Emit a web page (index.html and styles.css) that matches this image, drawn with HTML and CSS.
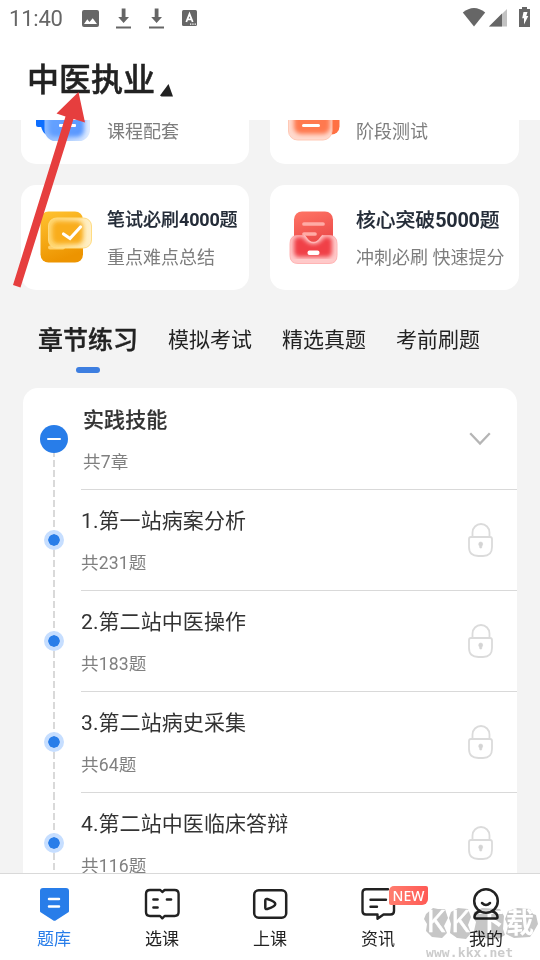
FILE: index.html
```html
<!DOCTYPE html>
<html lang="zh-CN">
<head>
<meta charset="utf-8">
<title>题库</title>
<link rel="stylesheet" href="styles.css">
</head>
<body>
<div class="app">
  <header class="header">
    <div class="status">
      <span class="clock">11:40</span>
      <svg class="status-left" width="125" height="30" viewBox="75 0 125 30" fill="#666">
        <path fill-rule="evenodd" d="M84 10h13q2 0 2 2v13q0 2-2 2H84q-2 0-2-2V12q0-2 2-2zm0 14h13l-4.300-5.800-3.200 3.800-2.200-2.700z"/>
        <path d="M121.700 8.500h3.800v8.500h3.500l-5.400 6-5.400-6h3.500zM116 26.500h15v2h-15zM154.700 8.500h3.800v8.500h3.500l-5.400 6-5.400-6h3.500zM149 26.500h15v2h-15z"/>
        <rect x="182" y="10" width="15" height="16" rx="1.500"/>
        <path d="M186.300 22l3.200-8 3.200 8M187.500 19.300h4" fill="none" stroke="#fff" stroke-width="1.800"/>
        <path d="M190 23.500h1.300v1.300H190zm2.300 0h1.300v1.300h-1.300zm2.300 0h1.300v1.300h-1.300z" fill="#fff"/>
      </svg>
      <svg class="status-right" width="75" height="30" viewBox="460 0 75 30" fill="#666">
        <path d="M474 26.500L462.800 12.500Q474 3.500 485.200 12.500z"/>
        <path d="M489 26.500L507 9v17.500z" fill="#c2c2c2"/><path d="M489 26.500L502 13.500v13z"/>
        <path d="M522 7h5v2h3v18h-11V9h3z"/>
        <path d="M523.500 12h4l-1.200 4h2l-4.300 8.500v-6.300h-1.800z" fill="#fff"/>
      </svg>
    </div>
    <div class="exam"><h1>中医执业</h1><svg width="13" height="13" viewBox="0 0 13 13"><path d="M8.500 0L13 12.500H1.500L0 11.500z" fill="#222"/></svg></div>
  </header>

  <main class="content">
    <section class="cards">
      <article class="card card-scrolled">
        <svg class="card-icon" width="60" height="60" viewBox="34 78 60 60">
          <defs><linearGradient id="b1" x2="1" y2="1"><stop stop-color="#6da8ff"/><stop offset="1" stop-color="#5796ff"/></linearGradient><linearGradient id="b2"><stop stop-color="#8bb9ff"/><stop offset="1" stop-color="#dfebff"/></linearGradient><filter id="soft"><feGaussianBlur stdDeviation="2.200"/></filter></defs>
          <path d="M36 82h43v42H38q-2 0-2-2z" fill="#0d6eff"/>
          <path d="M41 123.500h5v8q-3.500-2-5-8z" fill="#0d6eff"/>
          <rect x="44.500" y="90" width="45.500" height="48.500" rx="12" fill="url(#b2)"/>
          <rect x="48" y="92" width="36" height="42" rx="7" fill="url(#b1)" filter="url(#soft)"/>
          <rect x="59" y="121" width="17" height="3" rx="1" fill="#fff"/>
        </svg>
        <div class="card-text"><p>课程配套</p></div>
      </article>
      <article class="card card-right card-scrolled">
        <svg class="card-icon" width="60" height="60" viewBox="285 80 60 60">
          <rect x="299" y="84" width="40.500" height="49.500" rx="8" fill="#ff7043"/>
          <rect x="288.500" y="96.500" width="43.500" height="42.500" rx="9" fill="#ffd9cd" stroke="#ffc9b6"/>
          <rect x="294" y="98" width="36" height="35" rx="7" fill="#ff7950" filter="url(#soft)"/>
          <rect x="302" y="123" width="18" height="3" rx="1.500" fill="#fff"/>
        </svg>
        <div class="card-text"><p>阶段测试</p></div>
      </article>
      <article class="card">
        <svg class="card-icon" width="60" height="60" viewBox="34 207 60 60">
          <defs><linearGradient id="y1" x2=".3" y2="1"><stop stop-color="#ffc331"/><stop offset="1" stop-color="#ed9400"/></linearGradient><linearGradient id="y2"><stop stop-color="#ffd66e"/><stop offset="1" stop-color="#fff0ca"/></linearGradient></defs>
          <rect x="40.500" y="211.500" width="42.500" height="51" rx="8" fill="url(#y1)"/>
          <rect x="48" y="245.500" width="17" height="4" rx="2" fill="#ffd06a"/>
          <rect x="48.500" y="218" width="43" height="30" rx="8" fill="url(#y2)" stroke="#ffdc82"/>
          <rect x="52" y="221" width="31" height="23" rx="6" fill="#f9ad1d" filter="url(#soft)"/>
          <path d="M63.500 234l6.500 4.500 10.500-11.500" fill="none" stroke="#fff" stroke-width="3.200" stroke-linecap="round"/>
        </svg>
        <div class="card-text"><h2>笔试必刷<b>4000</b>题</h2><p>重点难点总结</p></div>
      </article>
      <article class="card card-right">
        <svg class="card-icon" width="60" height="60" viewBox="285 207 60 60">
          <defs><linearGradient id="r1" x2=".3" y2="1"><stop stop-color="#ff7565"/><stop offset="1" stop-color="#e84345"/></linearGradient></defs>
          <rect x="294" y="211.500" width="39" height="42" rx="8" fill="url(#r1)"/>
          <path d="M304 224h19M304 234h11" stroke="#ffaba5" stroke-width="3.700" stroke-linecap="round"/>
          <path d="M298 235.500h6c2 0 3 7 9.500 7s7-7 9.500-7h6q8 0 8 8v12q0 8-8 8h-31q-8 0-8-8v-12q0-8 8-8z" fill="#ffc9c9" stroke="#ffb4b4"/>
          <path d="M298 237h5q4 7 10.500 7t10.500-7h5q3 0 3 5v9q0 6-5 6h-28q-5 0-5-6v-9q0-5 4-5z" fill="#f04046" filter="url(#soft)"/>
          <path d="M304 235.500c2 0 3 7 9.500 7s7-7 9.500-7" fill="none" stroke="#ffb4b4" stroke-width="1.300"/>
          <rect x="307.500" y="250.500" width="12" height="4.500" rx="2" fill="#fff"/>
        </svg>
        <div class="card-text"><h2>核心突破<b>5000</b>题</h2><p>冲刺必刷 快速提分</p></div>
      </article>
    </section>

    <nav class="tabs">
      <span class="tab active">章节练习</span><span class="tab">模拟考试</span><span class="tab">精选真题</span><span class="tab">考前刷题</span>
    </nav>

    <section class="chapters">
      <div class="row group">
        <div class="rail"><i class="toggle"></i></div>
        <div class="row-body"><div><h3>实践技能</h3><p>共7章</p></div>
          <svg class="chevron" width="22" height="14" viewBox="0 0 22 14"><path d="M1.200 1.300L11 11.500 20.800 1.300" fill="none" stroke="#b5b5b5" stroke-width="2.300"/></svg></div>
      </div>
      <div class="row"><div class="rail"><i class="dot"></i></div><div class="row-body"><div><h3>1.第一站病案分析</h3><p>共231题</p></div><svg class="lock" width="26" height="34"><use href="#lock"/></svg></div></div>
      <div class="row"><div class="rail"><i class="dot"></i></div><div class="row-body"><div><h3>2.第二站中医操作</h3><p>共183题</p></div><svg class="lock" width="26" height="34"><use href="#lock"/></svg></div></div>
      <div class="row"><div class="rail"><i class="dot"></i></div><div class="row-body"><div><h3>3.第二站病史采集</h3><p>共64题</p></div><svg class="lock" width="26" height="34"><use href="#lock"/></svg></div></div>
      <div class="row"><div class="rail"><i class="dot"></i></div><div class="row-body"><div><h3>4.第二站中医临床答辩</h3><p>共116题</p></div><svg class="lock" width="26" height="34"><use href="#lock"/></svg></div></div>
    </section>
  </main>

  <nav class="bottom">
    <a class="item on"><svg width="40" height="36" viewBox="34 886 40 36"><path d="M43 888h23q3 0 3 3v20q0 1-1 1.600l-12 7.700q-1.500 1-3 0l-12-7.700q-1-.6-1-1.600v-20q0-3 3-3z" fill="#287de9"/><path d="M49 899h10M49 906.500h10" stroke="#fff" stroke-width="2.500" stroke-linecap="round"/></svg><span>题库</span></a>
    <a class="item"><svg width="40" height="36" viewBox="142 886 40 36" fill="none" stroke="#222" stroke-width="2.400" stroke-linejoin="round" stroke-linecap="round"><path d="M162.300 892l-2-2H150q-4 0-4 4v18q0 4 4 4h10l2.300 2.300 2.300-2.300h10q4 0 4-4v-18q0-4-4-4h-10z"/><path d="M153.500 899.500h4M167 899.500h4M153.500 907.500h4" stroke-width="2.700"/></svg><span>选课</span></a>
    <a class="item"><svg width="40" height="36" viewBox="250 886 40 36" fill="none" stroke="#222" stroke-width="2.500" stroke-linejoin="round"><rect x="254.200" y="890.200" width="32" height="27.500" rx="4.500"/><path d="M265.300 900.500q0-2 2-1.500 8 2.500 8 5t-8 5q-2 .5-2-1.500z"/></svg><span>上课</span></a>
    <a class="item"><svg width="40" height="36" viewBox="358 886 40 36" fill="none" stroke="#222" stroke-width="2.400" stroke-linejoin="round" stroke-linecap="round"><path d="M388 889.300h-22q-3.500 0-3.500 3.500V911q0 3.500 3.500 3.500h11.500v4.300l6-4.300h7q3.500 0 3.500-3.500v-6M370.500 899.700H386M370.500 906.700h6.500"/></svg><b class="badge">NEW</b><span>资讯</span></a>
    <a class="item"><svg width="40" height="36" viewBox="466 886 40 36" fill="none" stroke="#222" stroke-width="2.500" stroke-linejoin="round" stroke-linecap="round"><circle cx="486" cy="901" r="11.800"/><path d="M482 903q4 4 8 0M479.500 911.500q-5 1.500-5 5.500 0 1.500 1.500 1.500h20q1.500 0 1.500-1.500 0-4-5-5.500"/></svg><span>我的</span></a>
  </nav>

  <svg class="arrow" width="100" height="210" viewBox="0 85 100 210"><path d="M78.500 92L85 122.500 73.500 119 20.500 287.500 13 285 65.500 116.500 56.500 113.500z" fill="#e63e3e"/></svg>
  <div class="watermark">
    <svg width="118" height="36" viewBox="422 906 118 36">
      <g fill="#c6c6c6"><path d="M426 914l7-6 5 1 7 0 3 9-4 8 3 7-5 5-10-1-6-6 1-7-3-5z"/><path d="M451 912l7-4 10 1 3 8-3 8 3 8-5 6-9-1-7-5 1-9-2-6z"/><path d="M474 912l8-4 18 1 4 7-1 13 2 6-7 4-17-1-7-7 2-9-3-5z"/><path d="M508 911l9-3 13 1 3 5 3 1 2 9-4 7-4 6-16 1-8-4 2-8-3-7z"/></g>
      <text class="mark" x="426.500" y="932">K</text><text class="mark" x="451" y="932">K</text><text class="mark mark-cjk" x="476" y="933" textLength="58">下载</text>
    </svg>
    <div class="site">www.kkx.net</div>
  </div>
</div>
<svg class="defs" width="0" height="0"><defs><g id="lock" fill="none" stroke="#dbdbdb" stroke-width="1.800"><path d="M4.500 14V9.500a8.500 8.500 0 0 1 17 0V14"/><path d="M3 14h19q2 0 2 2v8q0 9-9 9h-4.500q-9.500 0-9.500-9v-8q0-2 2-2z"/><path d="M12.700 19q2 0 2 2 0 1-.8 2l-.4 2h-1.600l-.4-2q-.8-1-.8-2 0-2 2-2z" fill="#d4d4d4" stroke="#d4d4d4" stroke-width=".6"/></g></defs></svg>
</body>
</html>
```
FILE: styles.css
```css
* { box-sizing: border-box; margin: 0; padding: 0; }
body { width: 540px; height: 960px; overflow: hidden; font-family: Roboto, "Noto Sans CJK SC", sans-serif; color: #333; background: #f3f3f3; }
svg { display: block; flex: none; }
.app { position: relative; width: 540px; height: 960px; display: flex; flex-direction: column; overflow: hidden; background: #fff; }
.header { height: 120px; flex: none; background: #fff; }
.status { height: 36px; display: flex; align-items: flex-start; padding-left: 9px; }
.clock { width: 66px; font-size: 22px; line-height: 38px; color: #666; letter-spacing: -0.2px; }
.status-right { margin-left: auto; margin-right: 5px; }
.exam { display: flex; padding-left: 27px; gap: 5px; }
.exam h1 { font-size: 32px; line-height: 48px; margin-top: 20px; font-weight: 500; color: #222; -webkit-text-stroke: 0.5px #222; }
.exam svg { margin-top: 48px; }

.content { flex: 1; min-height: 0; overflow: hidden; background: #f3f3f3; }
.cards { display: grid; grid-template-columns: 228px 249px; gap: 21px; margin: -61px 21px 0; }
.card { height: 105px; border-radius: 15px; background: #fff; display: flex; padding: 22px 0 0 13px; }
.card-right { padding-left: 15px; }
.card-text { margin-left: 13px; white-space: nowrap; }
.card-right .card-text { margin-left: 11px; }
.card-scrolled .card-text { padding-top: 26px; }
.card h2 { font-size: 18px; line-height: 26px; font-weight: 500; color: #242c38; -webkit-text-stroke: 0.2px #242c38; }
.card h2 b { font-weight: 700; letter-spacing: -0.2px; -webkit-text-stroke: 0; }
.card-right h2 { font-size: 19.8px; line-height: 28px; }
.card p { font-size: 18px; line-height: 26px; margin-top: 12px; color: #7d7d7d; }
.card-right h2 + p { margin-top: 10px; }

.tabs { display: flex; gap: 30px; height: 98px; padding: 30px 0 0 38px; }
.tab { font-size: 21px; line-height: 40px; color: #222; white-space: nowrap; }
.tab.active { font-size: 25px; line-height: 42px; font-weight: 500; -webkit-text-stroke: 0.4px #222; }
.tab.active::after { content: ""; display: block; width: 24px; height: 6px; margin: 5px auto 0; border-radius: 3px; background: #3d7ee0; }

.chapters { margin: 0 23px; border-radius: 15px 15px 0 0; background: #fff; }
.row { display: flex; height: 101px; }
.row.group { height: 102px; }
.rail { width: 58px; flex: none; display: flex; justify-content: center; align-items: center; padding: 0 0 2px 4px; background: repeating-linear-gradient(to bottom, #d9d9d9 0 7px, transparent 7px 10px) 30px 0 / 2px 100% no-repeat; }
.group .rail { padding-bottom: 0; background-position: 30px 52px; }
.toggle { width: 28px; height: 28px; border-radius: 50%; background: #287de9; display: flex; align-items: center; justify-content: center; }
.toggle::after { content: ""; width: 14px; height: 2px; background: #fff; border-radius: 1px; }
.dot { width: 20px; height: 20px; border: 4px solid #c6deff; border-radius: 50%; background: #287de9; background-clip: padding-box; }
.row-body { flex: 1; display: flex; justify-content: space-between; border-bottom: 1px solid #d9d9d9; padding-right: 23px; }
.row:last-child .row-body { border-bottom: 0; }
.row h3 { font-size: 21px; line-height: 30px; margin-top: 16px; font-weight: 400; color: #333; letter-spacing: 0.08px; }
.row p { font-size: 17.6px; line-height: 26px; margin-top: 14px; color: #808080; letter-spacing: 0.1px; }
.group .row-body > div { padding-left: 2px; }
.group h3 { font-weight: 500; margin-top: 17px; -webkit-text-stroke: 0.2px #333; }
.group p { margin-top: 14px; }
.chevron { margin: 44px 3px 0 0; }
.lock { margin-top: 33px; overflow: visible; }

.bottom { height: 87px; flex: none; display: grid; grid-template-columns: repeat(5, 108px); background: #fff; border-top: 1px solid #d9d9d9; }
.item { position: relative; display: flex; flex-direction: column; align-items: center; padding-top: 12px; font-size: 17px; line-height: 24px; color: #222; }
.item span { margin-top: 5px; }
.item.on { color: #287de9; }
.badge { position: absolute; left: 65px; top: 12px; width: 39px; height: 19px; border-radius: 5px 2px 6px 2px; background: linear-gradient(90deg, #ff7d6e, #ff5a55); color: #fff; font: 500 14px/20px "Noto Sans", sans-serif; text-align: center; }

.arrow { position: absolute; left: 0; top: 85px; }
.watermark { position: absolute; left: 422px; top: 906px; mix-blend-mode: multiply; }
.mark { font: 400 30px "Noto Sans", sans-serif; fill: #fff; stroke: #fff; stroke-width: 0.5px; }
.mark-cjk { font: 700 28px "Noto Sans CJK SC", sans-serif; stroke: none; }
.site { font: 700 13px/14px "DejaVu Sans Mono", monospace; color: #ccc; margin: 4px 0 0 4px; letter-spacing: 0.1px; }
.defs { position: absolute; }
```
